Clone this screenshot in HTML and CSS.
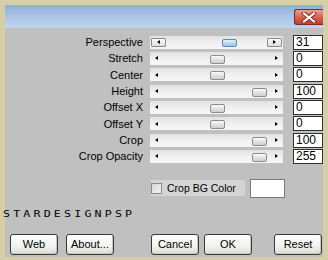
FILE: index.html
```html
<!DOCTYPE html>
<html>
<head>
<meta charset="utf-8">
<link rel="stylesheet" href="styles.css">
</head>
<body>
<div class="window">
  <div class="titlebar">
    <div class="close">
      <svg width="16" height="11" viewBox="0 0 16 11">
        <path d="M3 1.5 L13 9.5 M13 1.5 L3 9.5" stroke="#6a2a22" stroke-width="4" stroke-linecap="square"/>
        <path d="M3 1.5 L13 9.5 M13 1.5 L3 9.5" stroke="#ffffff" stroke-width="2.2" stroke-linecap="square"/>
      </svg>
    </div>
  </div>
  <div class="body">
    <div class="form">
      <div class="label">Perspective</div>
      <div class="slider active">
        <span class="abox"><span class="arrow left"></span></span>
        <span class="abox"><span class="arrow right"></span></span>
        <span class="thumb blue" style="left:72px"></span>
      </div>
      <div class="value">31</div>

      <div class="label">Stretch</div>
      <div class="slider"><span class="arrow left"></span><span class="arrow right"></span><span class="thumb" style="left:60px"></span></div>
      <div class="value">0</div>

      <div class="label">Center</div>
      <div class="slider"><span class="arrow left"></span><span class="arrow right"></span><span class="thumb" style="left:60px"></span></div>
      <div class="value">0</div>

      <div class="label">Height</div>
      <div class="slider"><span class="arrow left"></span><span class="arrow right"></span><span class="thumb" style="left:102px"></span></div>
      <div class="value">100</div>

      <div class="label">Offset X</div>
      <div class="slider"><span class="arrow left"></span><span class="arrow right"></span><span class="thumb" style="left:60px"></span></div>
      <div class="value">0</div>

      <div class="label">Offset Y</div>
      <div class="slider"><span class="arrow left"></span><span class="arrow right"></span><span class="thumb" style="left:60px"></span></div>
      <div class="value">0</div>

      <div class="label">Crop</div>
      <div class="slider"><span class="arrow left"></span><span class="arrow right"></span><span class="thumb" style="left:102px"></span></div>
      <div class="value">100</div>

      <div class="label">Crop Opacity</div>
      <div class="slider"><span class="arrow left"></span><span class="arrow right"></span><span class="thumb" style="left:102px"></span></div>
      <div class="value">255</div>
    </div>

    <div class="checkrow">
      <div class="check"><span class="box"></span><span>Crop BG Color</span></div>
      <div class="colorbox"></div>
    </div>

    <div class="brand">STARDESIGNPSP</div>

    <div class="buttons">
      <div class="group">
        <div class="btn">Web</div>
        <div class="btn">About...</div>
      </div>
      <div class="group right">
        <div class="btn">Cancel</div>
        <div class="btn">OK</div>
        <div class="btn reset">Reset</div>
      </div>
    </div>
  </div>
</div>
</body>
</html>
```

FILE: styles.css
```css
html, body {
  margin: 0;
  padding: 0;
  background: #d6cea4;
}
.window {
  width: 328px;
  height: 260px;
  box-sizing: border-box;
  padding: 5px 5px 3px 5px;
  display: flex;
  flex-direction: column;
  font-family: "Liberation Sans", Arial, sans-serif;
  font-size: 11px;
  color: #000;
  overflow: hidden;
}
.titlebar {
  height: 23px;
  flex: none;
  background: linear-gradient(#90afd7, #a9c3e3 45%, #bed4ee);
  display: flex;
  justify-content: flex-end;
  align-items: flex-start;
  padding-top: 4px;
  box-sizing: border-box;
}
.close {
  width: 29px;
  height: 16px;
  box-sizing: border-box;
  border: 1px solid #7a2a26;
  border-right: none;
  border-radius: 3px 0 0 3px;
  background: linear-gradient(#eaa394, #d8634f 50%, #c4402c);
  display: flex;
  align-items: center;
  justify-content: center;
}
.body {
  flex: 1;
  background: #c0c0c0;
  display: flex;
  flex-direction: column;
  padding-top: 6px;
}
.form {
  display: grid;
  grid-template-columns: 138px 133px 30px;
  grid-auto-rows: 16.33px;
  column-gap: 7px;
  align-items: center;
}
.form .value { margin-left: 3px; }
.label {
  text-align: right;
  font-size: 11px;
  line-height: 12px;
}
.slider {
  position: relative;
  height: 13px;
  box-sizing: border-box;
  background: linear-gradient(#e2e2e2, #f2f2f2 60%, #f6f6f6);
  display: flex;
  align-items: center;
  justify-content: space-between;
  padding: 0 5px;
}
.slider.active { padding: 0 1px; }
.abox {
  width: 15px;
  height: 9px;
  box-sizing: border-box;
  border: 1px solid #8a8a8a;
  background: linear-gradient(#fafafa, #dcdcdc);
  border-radius: 1px;
  display: flex;
  align-items: center;
  justify-content: center;
}
.arrow {
  width: 0;
  height: 0;
  border-top: 2.5px solid transparent;
  border-bottom: 2.5px solid transparent;
}
.arrow.left { border-right: 3px solid #000; }
.arrow.right { border-left: 3px solid #000; }
.thumb {
  position: absolute;
  top: 3px;
  width: 15px;
  height: 9px;
  box-sizing: border-box;
  border: 1px solid #8c8c8c;
  border-radius: 2px;
  background: linear-gradient(#fbfbfb, #dedede 60%, #cfcfcf);
}
.thumb.blue {
  top: 3px;
  height: 8px;
  border-color: #5d87b8;
  background: linear-gradient(#e6f2fc, #b4d4f0 60%, #a3c8ec);
}
.value {
  height: 15px;
  width: 30px;
  box-sizing: border-box;
  background: #fff;
  border: 1px solid #303030;
  font-size: 12px;
  line-height: 13px;
  padding-left: 2px;
}
.checkrow {
  display: flex;
  align-items: center;
  margin-top: 14px;
  margin-left: 146px;
  gap: 5px;
  height: 19px;
}
.check {
  display: flex;
  align-items: center;
  gap: 5px;
  width: 94px;
  height: 16px;
  background: #d4d4d4;
  font-size: 10.5px;
}
.box {
  width: 11px;
  height: 11px;
  box-sizing: border-box;
  border: 1px solid #8a8a8a;
  background: linear-gradient(135deg, #d6d6d6, #f4f4f4);
}
.colorbox {
  width: 35px;
  height: 19px;
  box-sizing: border-box;
  background: #fff;
  border: 1px solid #7a7a7a;
}
.brand {
  align-self: flex-start;
  width: max-content;
  margin-top: 13px;
  margin-left: -2px;
  font-family: "DejaVu Sans Mono", monospace;
  font-size: 8px;
  line-height: 8px;
  letter-spacing: 2.2px;
  transform: scaleX(1.45);
  transform-origin: left center;
  color: #000;
  white-space: nowrap;
}
.buttons {
  margin-top: 15px;
  display: flex;
  justify-content: space-between;
  padding: 0 1px 0 5px;
}
.group {
  display: flex;
  gap: 8px;
}
.group.right { gap: 5px; }
.btn.reset { margin-left: 17px; }
.btn {
  width: 48px;
  height: 21px;
  box-sizing: border-box;
  border: 1px solid #3a3a3a;
  border-radius: 3px;
  background: linear-gradient(#ffffff, #f2f2ee 60%, #dcdcd6);
  box-shadow: inset -1px -1px 0 #c8c8c0;
  display: flex;
  align-items: center;
  justify-content: center;
  font-size: 11px;
}
```
